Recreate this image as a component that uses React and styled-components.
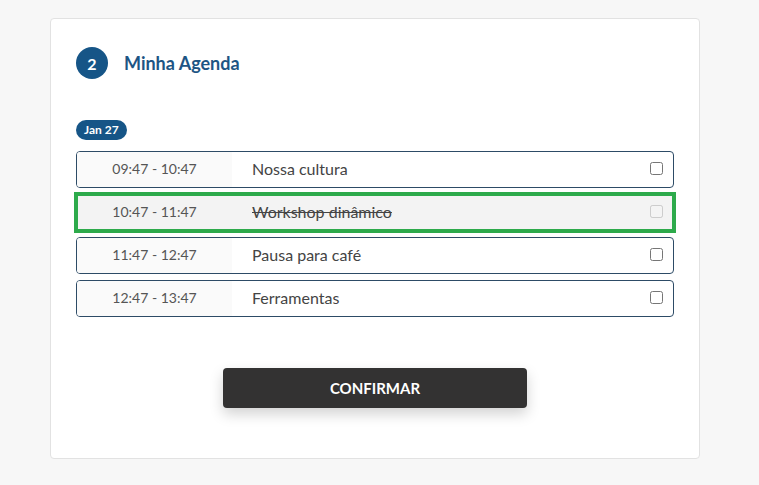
import React, { useState } from "react";
import styled, { createGlobalStyle } from "styled-components";

const GlobalStyle = createGlobalStyle`
  body {
    margin: 0;
    background: #f7f7f7;
    font-family: Lato, "Open Sans", sans-serif;
  }
`;

const initialSessions = [
  { id: 1, time: "09:47 - 10:47", title: "Nossa cultura", done: false },
  { id: 2, time: "10:47 - 11:47", title: "Workshop dinâmico", done: true },
  { id: 3, time: "11:47 - 12:47", title: "Pausa para café", done: false },
  { id: 4, time: "12:47 - 13:47", title: "Ferramentas", done: false },
];

export default function App() {
  const [sessions, setSessions] = useState(initialSessions);

  const toggle = (id) =>
    setSessions((list) =>
      list.map((s) => (s.id === id ? { ...s, checked: !s.checked } : s))
    );

  return (
    <>
      <GlobalStyle />
      <Page>
        <Card>
          <Header>
            <StepBadge>2</StepBadge>
            <Title>Minha Agenda</Title>
          </Header>

          <DatePill>Jan 27</DatePill>

          <List>
            {sessions.map((s) => (
              <Row key={s.id} $done={s.done}>
                <Time $done={s.done}>{s.time}</Time>
                <Name $done={s.done}>{s.title}</Name>
                <Check
                  type="checkbox"
                  disabled={s.done}
                  checked={!!s.checked}
                  onChange={() => toggle(s.id)}
                />
              </Row>
            ))}
          </List>

          <ConfirmButton>CONFIRMAR</ConfirmButton>
        </Card>
      </Page>
    </>
  );
}

const Page = styled.div`
  padding: 18px 59px 26px 50px;
`;

const Card = styled.div`
  box-sizing: content-box;
  width: 598px;
  background: #fff;
  border: 1px solid #e2e2e2;
  border-radius: 4px;
  padding: 28px 25px 50px;
`;

const Header = styled.div`
  display: flex;
  align-items: center;
  gap: 16px;
`;

const StepBadge = styled.div`
  width: 32px;
  height: 32px;
  border-radius: 50%;
  background: #165587;
  color: #fff;
  font-size: 16px;
  font-weight: 700;
  display: flex;
  align-items: center;
  justify-content: center;
`;

const Title = styled.h2`
  margin: 0;
  font-size: 18px;
  font-weight: 700;
  color: #1d5584;
`;

const DatePill = styled.div`
  display: inline-block;
  margin-top: 41px;
  padding: 0 8px;
  height: 20px;
  line-height: 20px;
  border-radius: 10px;
  background: #165587;
  color: #fff;
  font-size: 12px;
  font-weight: 700;
`;

const List = styled.div`
  margin-top: 11px;
  display: flex;
  flex-direction: column;
  gap: 6px;
`;

const Row = styled.div`
  height: 37px;
  box-sizing: border-box;
  display: flex;
  align-items: stretch;
  border: 1px solid #2d4b66;
  border-radius: ${(p) => (p.$done ? "0" : "4px")};
  overflow: hidden;
  background: ${(p) => (p.$done ? "#f3f3f3" : "#fff")};
  outline: ${(p) => (p.$done ? "4px solid #2daa4b" : "none")};
  outline-offset: -2px;
`;

const Time = styled.div`
  width: 155px;
  flex-shrink: 0;
  display: flex;
  align-items: center;
  justify-content: center;
  padding-bottom: 3px;
  background: ${(p) => (p.$done ? "transparent" : "#fafafa")};
  color: #555;
  font-size: 14px;
`;

const Name = styled.div`
  flex: 1;
  display: flex;
  align-items: center;
  padding: 0 0 3px 20px;
  color: #444;
  font-size: 16px;
  text-decoration: ${(p) => (p.$done ? "line-through" : "none")};
`;

const Check = styled.input`
  align-self: center;
  width: 13px;
  height: 13px;
  margin: 0 10px 3px 0;
`;

const ConfirmButton = styled.button`
  display: block;
  margin: 51px auto 0;
  width: 304px;
  height: 40px;
  border: none;
  border-radius: 4px;
  background: #333232;
  color: #fff;
  font-family: Lato, sans-serif;
  font-size: 15px;
  font-weight: 700;
  box-shadow: 0 6px 14px rgba(0, 0, 0, 0.18);
  cursor: pointer;
`;
